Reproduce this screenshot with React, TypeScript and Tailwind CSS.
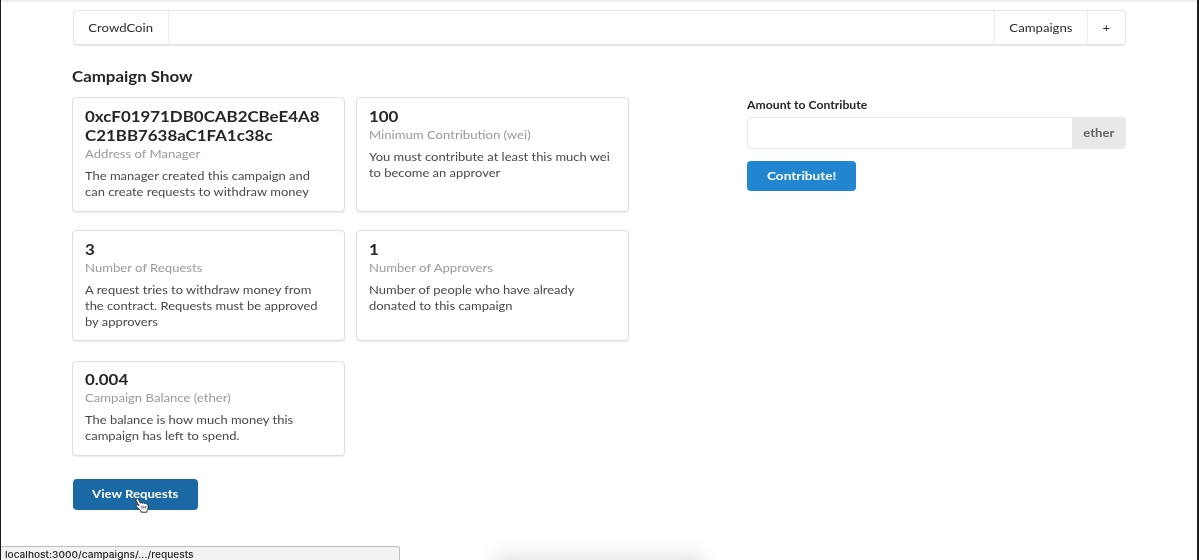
import type { ReactNode } from "react";

type Stat = { header: string; meta: string; description: string };

const rows: { size: string; padding: string; stats: Stat[] }[] = [
  {
    size: "h-[115px]",
    padding: "pt-[9px]",
    stats: [
      {
        header: "0xcF01971DB0CAB2CBeE4A8C21BB7638aC1FA1c38c",
        meta: "Address of Manager",
        description: "The manager created this campaign and can create requests to withdraw money",
      },
      {
        header: "100",
        meta: "Minimum Contribution (wei)",
        description: "You must contribute at least this much wei to become an approver",
      },
    ],
  },
  {
    size: "h-[111px]",
    padding: "pt-[9px]",
    stats: [
      {
        header: "3",
        meta: "Number of Requests",
        description:
          "A request tries to withdraw money from the contract. Requests must be approved by approvers",
      },
      {
        header: "1",
        meta: "Number of Approvers",
        description: "Number of people who have already donated to this campaign",
      },
    ],
  },
  {
    size: "h-[95px]",
    padding: "pt-[8px]",
    stats: [
      {
        header: "0.004",
        meta: "Campaign Balance (ether)",
        description: "The balance is how much money this campaign has left to spend.",
      },
    ],
  },
];

function Wide({ children }: { children: ReactNode }) {
  return <span className="inline-block scale-x-[1.13] whitespace-nowrap">{children}</span>;
}

function Card({ stat, size, padding }: { stat: Stat; size: string; padding: string }) {
  return (
    <article
      className={`${size} ${padding} w-[273px] rounded-[4px] border border-[#dedfdf] bg-white px-[12px] shadow-[0_1px_1px_#ececec]`}
    >
      <h3 className="w-[214px] origin-left scale-x-[1.126] text-[15px] leading-[19.3px] font-bold break-all text-[#262626]">
        {stat.header}
      </h3>
      <p className="-mt-[0.6px] w-[214px] origin-left scale-x-[1.126] text-[11.65px] leading-[17px] text-[#999]">
        {stat.meta}
      </p>
      <p className="mt-[6px] w-[219px] origin-left scale-x-[1.113] text-[11.65px] leading-[16px] text-[#484848]">
        {stat.description}
      </p>
    </article>
  );
}

function HandCursor() {
  return (
    <svg viewBox="0 0 14 15" className="absolute top-[19px] left-[62px] h-[15px] w-[14px]">
      <path
        d="M1.2 1.1c.9-.7 1.8-.3 2.3.5l2 3.6c.4-.8 1.5-.8 2 .1.5-.7 1.6-.6 2 .3.6-.6 1.6-.3 1.8.5.8-.4 1.6.1 1.7 1l.2 2.7c0 1.400-.8 2.200-1.300 3.100v1.300H6.100v-1.300L2.300 9.400C1.200 8.400.7 7.600 1.200 7c.8-.8 1.800 0 2.700.7L1.100 2.800c-.3-.6-.3-1.200.1-1.700z"
        fill="#fff"
        stroke="#242a30"
        strokeWidth="1"
        strokeLinejoin="round"
      />
      <path d="M6.700 7.900l.4 2.800M8.800 7.900l.2 2.800M10.900 7.900v2.800" stroke="#242a30" strokeWidth="0.800" />
    </svg>
  );
}

export default function App() {
  return (
    <div className="relative h-[560px] w-[1199px] overflow-hidden border-r-2 border-l border-r-[#1c1c20] border-l-[#1c1c20] bg-white font-['Lato',sans-serif]">
      <div className="h-[2px] bg-[#efefef]" />
      <div className="mt-[8px] ml-[72px] w-[1053px]">
        <nav className="flex h-[35px] rounded-[4px] border border-[#e4e4e4] text-[11.65px] text-[#2b2b2b] shadow-[0_1px_1px_#e6e6e6]">
          <a className="flex w-[95px] items-center justify-center border-r border-[#ececec]">
            <Wide>CrowdCoin</Wide>
          </a>
          <div className="ml-auto flex">
            <a className="flex w-[93px] items-center justify-center border-l border-[#ececec]">
              <Wide>Campaigns</Wide>
            </a>
            <a className="flex w-[38px] items-center justify-center border-l border-[#ececec]">
              <Wide>+</Wide>
            </a>
          </div>
        </nav>

        <h2 className="mt-[21px] -ml-px h-[20px] text-[15px] leading-[20px] font-bold text-[#262626]">
          <span className="inline-block origin-left scale-x-[1.125]">Campaign Show</span>
        </h2>

        <div className="mt-[11px] flex items-start justify-between">
          <section>
            <div className="-ml-px flex flex-col">
              {rows.map((row) => (
                <div key={row.size} className="flex gap-[11px] pb-[20px] first:pb-[18px]">
                  {row.stats.map((stat) => (
                    <Card key={stat.meta} stat={stat} size={row.size} padding={row.padding} />
                  ))}
                </div>
              ))}
            </div>
            <button className="relative mt-[2.5px] flex h-[31px] w-[125px] items-center justify-center rounded-[4px] bg-[#1a69a4] text-[11.65px] font-bold text-white">
              <Wide>View Requests</Wide>
              <HandCursor />
            </button>
          </section>

          <form className="w-[379px]">
            <label className="block h-[20px] text-[10.8px] leading-[16px] font-bold text-[#262626]">
              <span className="inline-block origin-left scale-x-[1.132]">Amount to Contribute</span>
            </label>
            <div className="flex h-[32px]">
              <input className="min-w-0 flex-1 rounded-l-[4px] border border-r-0 border-[#e6e6e6] bg-white" />
              <div className="flex w-[54px] items-center justify-center rounded-r-[4px] bg-[#e8e8e8] pb-px text-[11.65px] leading-[16px] font-bold text-[#656565]">
                <Wide>ether</Wide>
              </div>
            </div>
            <button
              type="button"
              className="mt-[11.5px] flex h-[30.5px] w-[109px] items-center justify-center rounded-[4px] bg-[#2185d0] text-[11.65px] font-bold text-white"
            >
              <span className="inline-block scale-x-[1.17] whitespace-nowrap">Contribute!</span>
            </button>
          </form>
        </div>
      </div>

      <div className="absolute top-[553px] left-[492px] h-[24px] w-[212px] rounded-[8px] bg-[#e9e9e9] blur-[8px]" />
      <div className="absolute bottom-0 left-0 flex h-[14px] w-[399px] items-center rounded-tr-[3px] border-t border-r border-[#bdbdbd] bg-[#f3f3f3] pt-[2px] pl-[4px] font-['Inter',sans-serif] text-[9.4px] leading-[13px] font-medium text-[#222]">
        <span className="origin-left scale-x-[1.08] whitespace-nowrap">localhost:3000/campaigns/.../requests</span>
      </div>
    </div>
  );
}
